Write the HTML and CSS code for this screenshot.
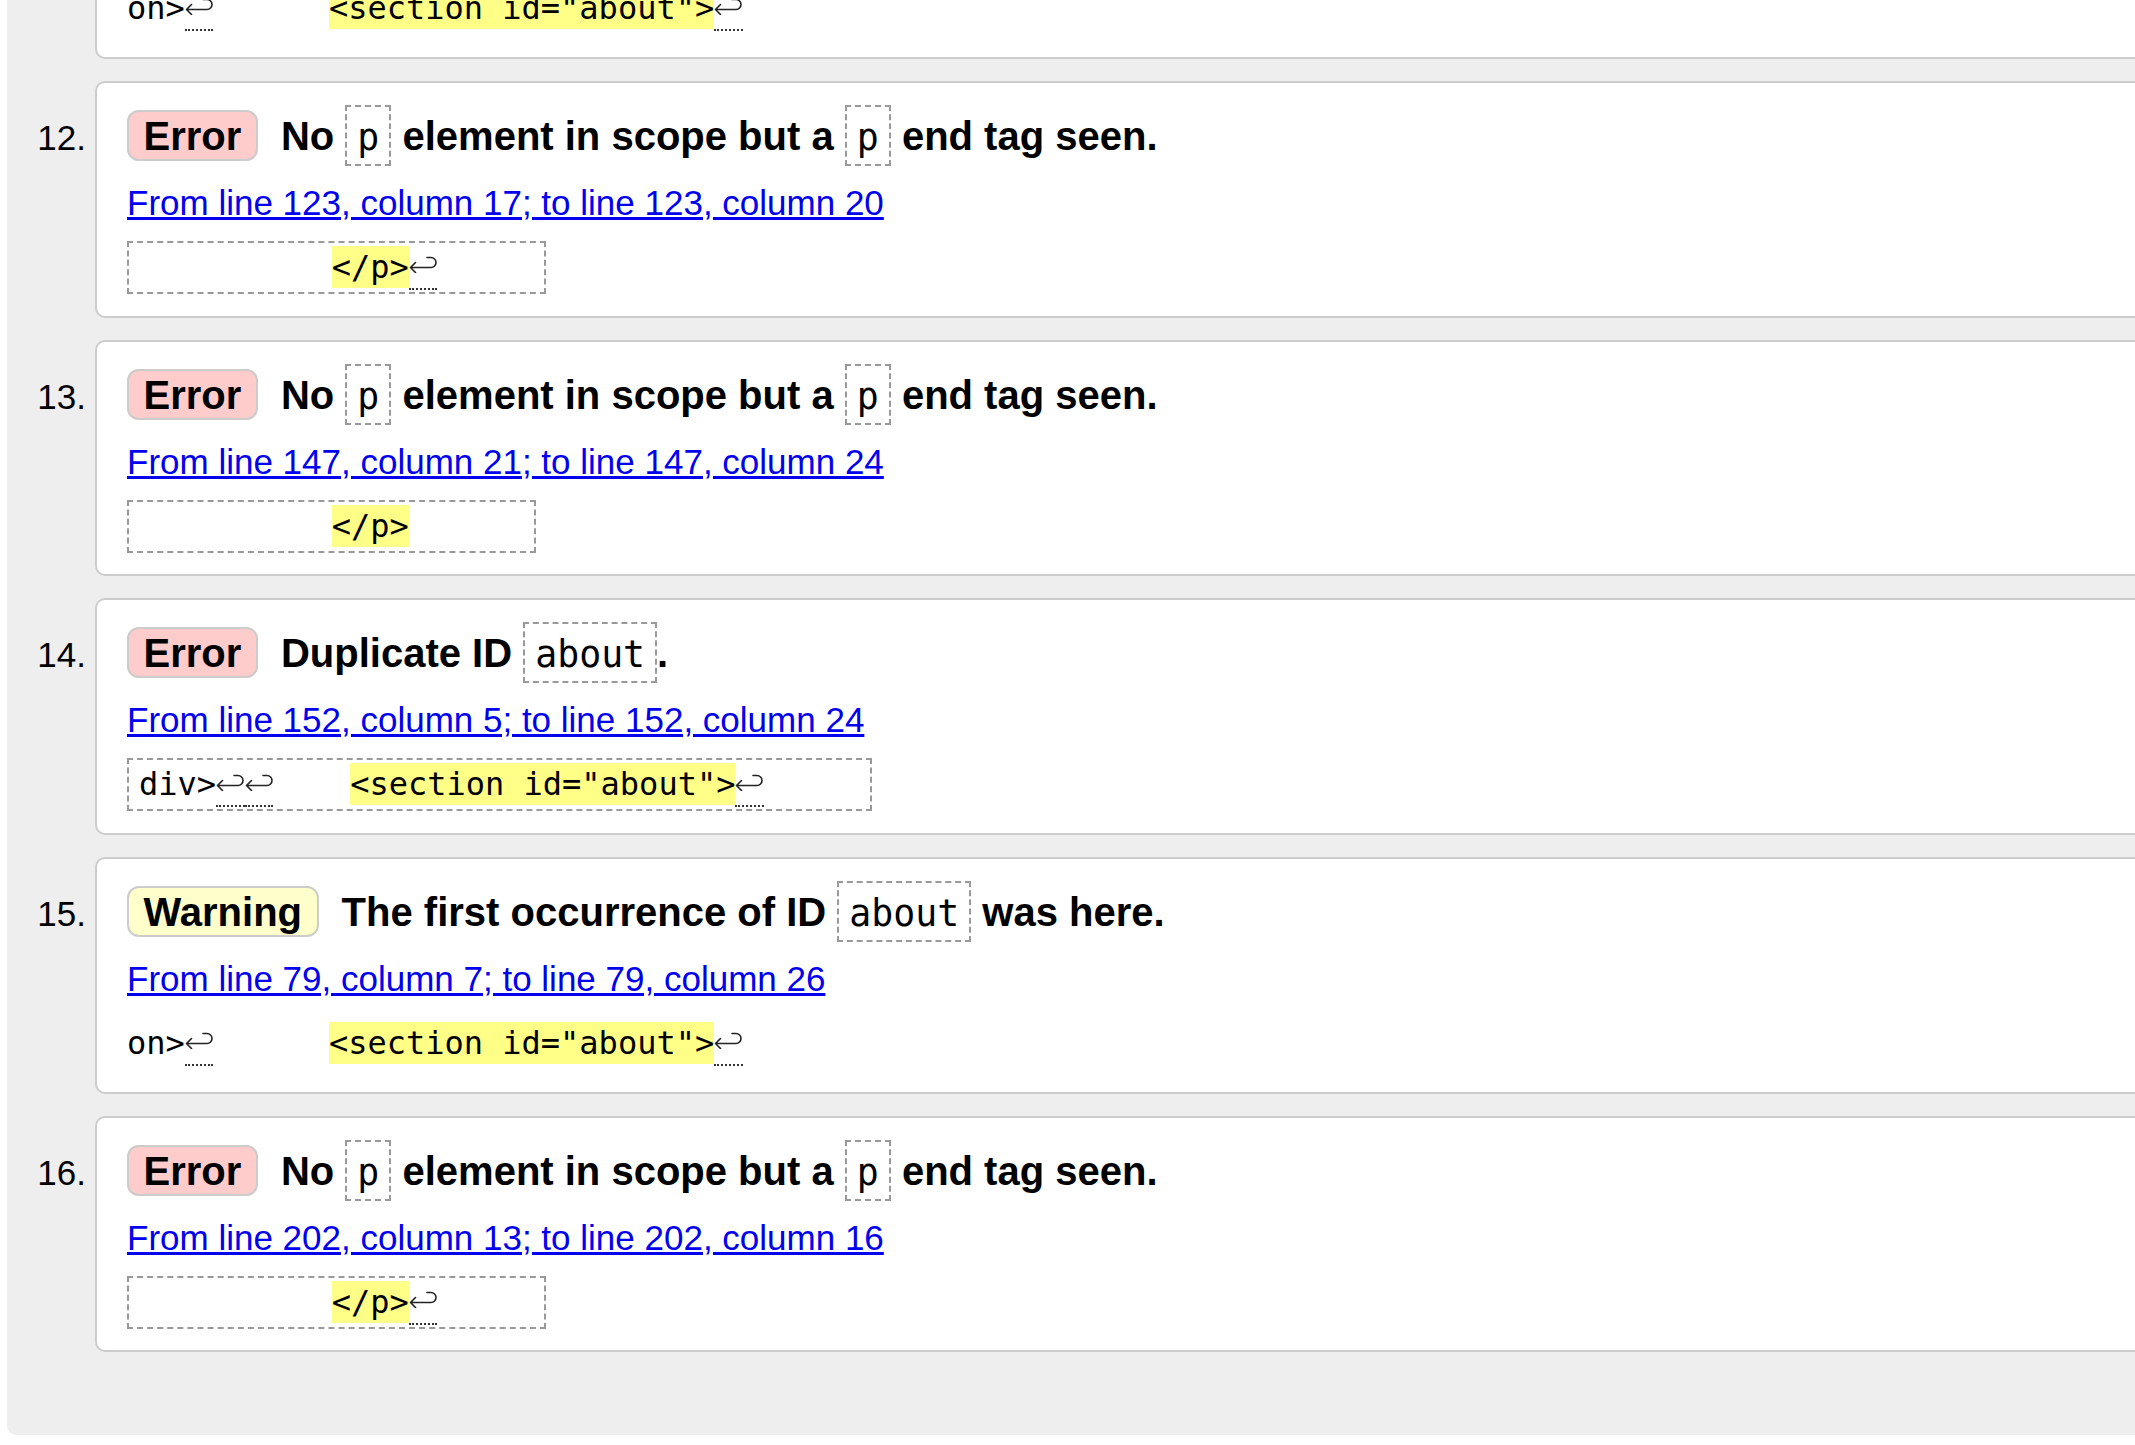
FILE: index.html
```html
<!DOCTYPE html>
<html lang="en">
<head>
<meta charset="utf-8">
<title>Validation results</title>
<link rel="stylesheet" href="styles.css">
</head>
<body>
<ol class="results">
  <li class="item item-cut">
    <span class="num"></span>
    <div class="card card-cut">
      <div class="extract plain">on&gt;<span class="lf"><svg class="lf-icon" viewBox="0 0 28.5 18"><path d="M6.5 7.5 L1.5 12.5 L6.5 17.5 M1.5 12.5 H22 A5 5 0 0 0 22 2.5 H18"/></svg></span>      <span class="hl">&lt;section id="about"&gt;</span><span class="lf"><svg class="lf-icon" viewBox="0 0 28.5 18"><path d="M6.5 7.5 L1.5 12.5 L6.5 17.5 M1.5 12.5 H22 A5 5 0 0 0 22 2.5 H18"/></svg></span></div>
    </div>
  </li>
  <li class="item">
    <span class="num">12.</span>
    <div class="card">
      <p class="msg"><strong class="badge error">Error</strong> No <code>p</code> element in scope but a <code>p</code> end tag seen.</p>
      <p class="loc"><a href="#l123">From line 123, column 17; to line 123, column 20</a></p>
      <div class="extract">          <span class="hl">&lt;/p&gt;</span><span class="lf"><svg class="lf-icon" viewBox="0 0 28.5 18"><path d="M6.5 7.5 L1.5 12.5 L6.5 17.5 M1.5 12.5 H22 A5 5 0 0 0 22 2.5 H18"/></svg></span>     </div>
    </div>
  </li>
  <li class="item">
    <span class="num">13.</span>
    <div class="card">
      <p class="msg"><strong class="badge error">Error</strong> No <code>p</code> element in scope but a <code>p</code> end tag seen.</p>
      <p class="loc"><a href="#l147">From line 147, column 21; to line 147, column 24</a></p>
      <div class="extract">          <span class="hl">&lt;/p&gt;</span>      </div>
    </div>
  </li>
  <li class="item">
    <span class="num">14.</span>
    <div class="card">
      <p class="msg"><strong class="badge error">Error</strong> Duplicate ID <code>about</code>.</p>
      <p class="loc"><a href="#l152">From line 152, column 5; to line 152, column 24</a></p>
      <div class="extract">div&gt;<span class="lf"><svg class="lf-icon" viewBox="0 0 28.5 18"><path d="M6.5 7.5 L1.5 12.5 L6.5 17.5 M1.5 12.5 H22 A5 5 0 0 0 22 2.5 H18"/></svg></span><span class="lf"><svg class="lf-icon" viewBox="0 0 28.5 18"><path d="M6.5 7.5 L1.5 12.5 L6.5 17.5 M1.5 12.5 H22 A5 5 0 0 0 22 2.5 H18"/></svg></span>    <span class="hl">&lt;section id="about"&gt;</span><span class="lf"><svg class="lf-icon" viewBox="0 0 28.5 18"><path d="M6.5 7.5 L1.5 12.5 L6.5 17.5 M1.5 12.5 H22 A5 5 0 0 0 22 2.5 H18"/></svg></span>     </div>
    </div>
  </li>
  <li class="item">
    <span class="num">15.</span>
    <div class="card">
      <p class="msg"><strong class="badge warning">Warning</strong> The first occurrence of ID <code>about</code> was here.</p>
      <p class="loc"><a href="#l79">From line 79, column 7; to line 79, column 26</a></p>
      <div class="extract plain">on&gt;<span class="lf"><svg class="lf-icon" viewBox="0 0 28.5 18"><path d="M6.5 7.5 L1.5 12.5 L6.5 17.5 M1.5 12.5 H22 A5 5 0 0 0 22 2.5 H18"/></svg></span>      <span class="hl">&lt;section id="about"&gt;</span><span class="lf"><svg class="lf-icon" viewBox="0 0 28.5 18"><path d="M6.5 7.5 L1.5 12.5 L6.5 17.5 M1.5 12.5 H22 A5 5 0 0 0 22 2.5 H18"/></svg></span></div>
    </div>
  </li>
  <li class="item">
    <span class="num">16.</span>
    <div class="card">
      <p class="msg"><strong class="badge error">Error</strong> No <code>p</code> element in scope but a <code>p</code> end tag seen.</p>
      <p class="loc"><a href="#l202">From line 202, column 13; to line 202, column 16</a></p>
      <div class="extract">          <span class="hl">&lt;/p&gt;</span><span class="lf"><svg class="lf-icon" viewBox="0 0 28.5 18"><path d="M6.5 7.5 L1.5 12.5 L6.5 17.5 M1.5 12.5 H22 A5 5 0 0 0 22 2.5 H18"/></svg></span>     </div>
    </div>
  </li>
</ol>
</body>
</html>
```
FILE: styles.css
```css
html, body {
  margin: 0;
  padding: 0;
  overflow: hidden;
  background: #fff;
}

body {
  font-family: "Liberation Sans", Arial, sans-serif;
  font-size: 35px;
  color: #000;
}

.results {
  list-style: none;
  margin: -19.7px 0 0 7px;
  padding: 0 0 82.8px 0;
  width: calc(100% + 200px);
  background: #eee;
  border-radius: 0 0 0 10px;
}

.item {
  display: flex;
  align-items: baseline;
}

.item-cut {
  align-items: flex-start;
}

.item + .item {
  margin-top: 22px;
}

.num {
  flex: none;
  width: 79px;
  padding-right: 9px;
  text-align: right;
  font-size: 35px;
}

.card {
  flex: 1;
  background: #fff;
  border: 2px solid #ccc;
  border-right: 0;
  border-radius: 10px 0 0 10px;
  padding: 20px 0 21.7px 30px;
}

.card-cut {
  padding-top: 0;
}

.card-cut .extract {
  margin-top: 0;
}

.msg {
  margin: 0;
  font-size: 40px;
  font-weight: bold;
  line-height: 66px;
  white-space: nowrap;
}

.badge {
  border: 2px solid #ccc;
  border-radius: 12px;
  padding: 2px 14.5px 1px;
  margin-right: 12px;
}

.badge.error {
  background: #fcc;
}

.badge.warning {
  background: #ffc;
}

.msg code {
  font-family: "DejaVu Sans Mono", monospace;
  font-weight: normal;
  font-size: 36.5px;
  line-height: 40px;
  border: 2px dashed #999;
  padding: 9px 10px 5px;
}

.loc {
  margin: 11px 0 0;
  font-size: 35px;
  line-height: 46px;
}

.loc a {
  color: #00e;
}

.extract {
  margin-top: 15px;
  width: fit-content;
  border: 2px dashed #999;
  padding: 0 10px;
  font-family: "DejaVu Sans Mono", monospace;
  font-size: 32px;
  line-height: 49px;
  white-space: pre;
}

.extract.plain {
  border-color: transparent;
  border-left: 0;
  padding-left: 0;
}

.hl {
  background: #ff8;
  padding: 2px 0;
}

.lf {
  border-bottom: 2px dotted #333;
  padding-bottom: 2px;
}

.lf-icon {
  width: 28.5px;
  height: 18px;
  vertical-align: 4.6px;
  fill: none;
  stroke: #222;
  stroke-width: 1.6;
  stroke-linecap: round;
  stroke-linejoin: round;
}
```
